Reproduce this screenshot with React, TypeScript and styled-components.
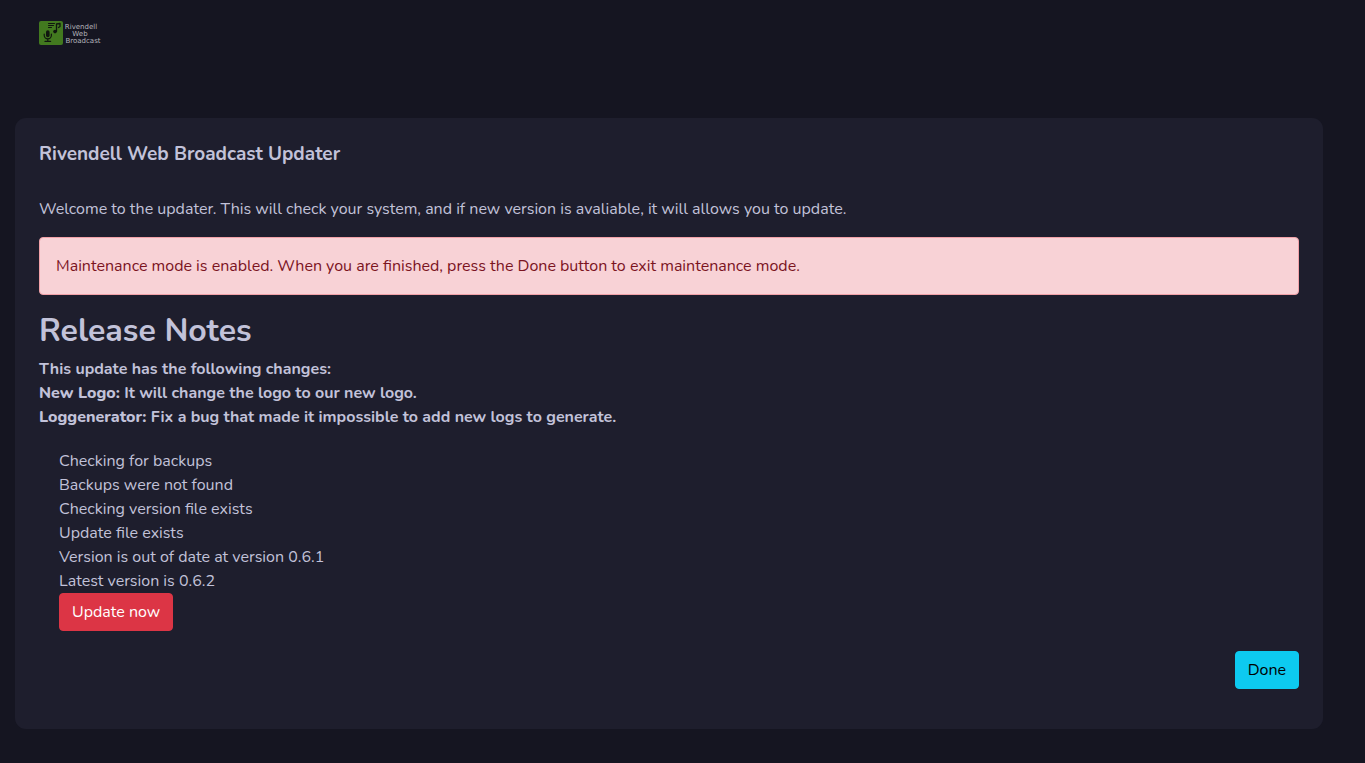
import React from 'react';
import styled, { createGlobalStyle } from 'styled-components';

const GlobalStyle = createGlobalStyle`
  *, *::before, *::after { box-sizing: border-box; }
  body {
    margin: 0;
    background: #151521;
    color: #c2c2d9;
    font-family: Nunito, "Open Sans", sans-serif;
    font-size: 16px;
    line-height: 24px;
  }
  h1, h2, p, ul { margin: 0; }
`;

const Header = styled.header`
  padding: 21px 39px 0;
  height: 118px;
`;

const LogoLink = styled.a`
  display: inline-block;
  line-height: 0;
`;

const Main = styled.main`
  padding: 0 42px 34px 15px;
`;

const Card = styled.section`
  padding: 24px 24px 40px;
  border-radius: 11px;
  background: #1e1e2d;
`;

const Title = styled.h1`
  margin-bottom: 31px;
  font-size: 19px;
  font-weight: 700;
  line-height: 24px;
`;

const Alert = styled.div`
  margin: 16px 0;
  padding: 16px;
  border: 1px solid #f1a1a8;
  border-radius: 4px;
  background: #f8d2d6;
  color: #7b141f;
`;

const NotesTitle = styled.h2`
  margin-bottom: 6px;
  font-size: 32px;
  font-weight: 700;
  line-height: 40px;
`;

const Notes = styled.div`
  margin-bottom: 20px;
  font-weight: 700;

  b { font-weight: 800; }
`;

const Steps = styled.div`
  padding-left: 20px;
`;

const StepList = styled.ul`
  padding: 0;
  list-style: none;
`;

const Button = styled.button<{ $tone: 'danger' | 'info' }>`
  display: block;
  padding: 6px 12px;
  border: 1px solid ${(p) => (p.$tone === 'danger' ? '#dc3545' : '#0dcaf0')};
  border-radius: 4px;
  background: ${(p) => (p.$tone === 'danger' ? '#dc3545' : '#0dcaf0')};
  color: ${(p) => (p.$tone === 'danger' ? '#fff' : '#000')};
  font: inherit;
  cursor: pointer;
`;

const Actions = styled.div`
  display: flex;
  justify-content: flex-end;
  margin-top: 20px;
`;

const steps = [
  'Checking for backups',
  'Backups were not found',
  'Checking version file exists',
  'Update file exists',
  'Version is out of date at version 0.6.1',
  'Latest version is 0.6.2',
];

function Logo() {
  return (
    <svg width="66" height="24" viewBox="0 0 66 24" role="img" aria-label="Rivendell Web Broadcast">
      <rect width="24" height="24" rx="2" fill="#42791f" />
      <g fill="none" stroke="#10170f" strokeLinecap="round" strokeLinejoin="round">
        <path d="M9.500 2.500h6M9.500 4.500h5M9.500 6.500h3" strokeWidth="1" />
        <path d="M17.500 10.500V3l3.500-.5v3l-1.500 1" strokeWidth="1.300" />
        <path d="M5.200 13v1.200a3.600 3.600 0 0 0 7.200 0V13M8.800 18v2.300M6 20.400h5.600" strokeWidth="1.200" />
      </g>
      <circle cx="16" cy="10.600" r="1.800" fill="#10170f" />
      <rect x="7" y="9.300" width="3.600" height="7" rx="1.800" fill="#10170f" />
      <g fill="#b4b4bb" fontFamily="DejaVu Sans, sans-serif" fontSize="7" textAnchor="middle">
        <text x="42" y="8">Rivendell</text>
        <text x="41" y="15">Web</text>
        <text x="44" y="22">Broadcast</text>
      </g>
    </svg>
  );
}

export default function App() {
  return (
    <>
      <GlobalStyle />
      <Header>
        <LogoLink href="#"><Logo /></LogoLink>
      </Header>
      <Main>
        <Card>
          <Title>Rivendell Web Broadcast Updater</Title>
          <p>Welcome to the updater. This will check your system, and if new version is avaliable, it will allows you to update.</p>
          <Alert role="alert">Maintenance mode is enabled. When you are finished, press the Done button to exit maintenance mode.</Alert>
          <NotesTitle>Release Notes</NotesTitle>
          <Notes>
            <p>This update has the following changes:</p>
            <p><b>New Logo:</b> It will change the logo to our new logo.</p>
            <p><b>Loggenerator:</b> Fix a bug that made it impossible to add new logs to generate.</p>
          </Notes>
          <Steps>
            <StepList>
              {steps.map((s) => <li key={s}>{s}</li>)}
            </StepList>
            <Button type="button" $tone="danger">Update now</Button>
          </Steps>
          <Actions>
            <Button type="button" $tone="info">Done</Button>
          </Actions>
        </Card>
      </Main>
    </>
  );
}
